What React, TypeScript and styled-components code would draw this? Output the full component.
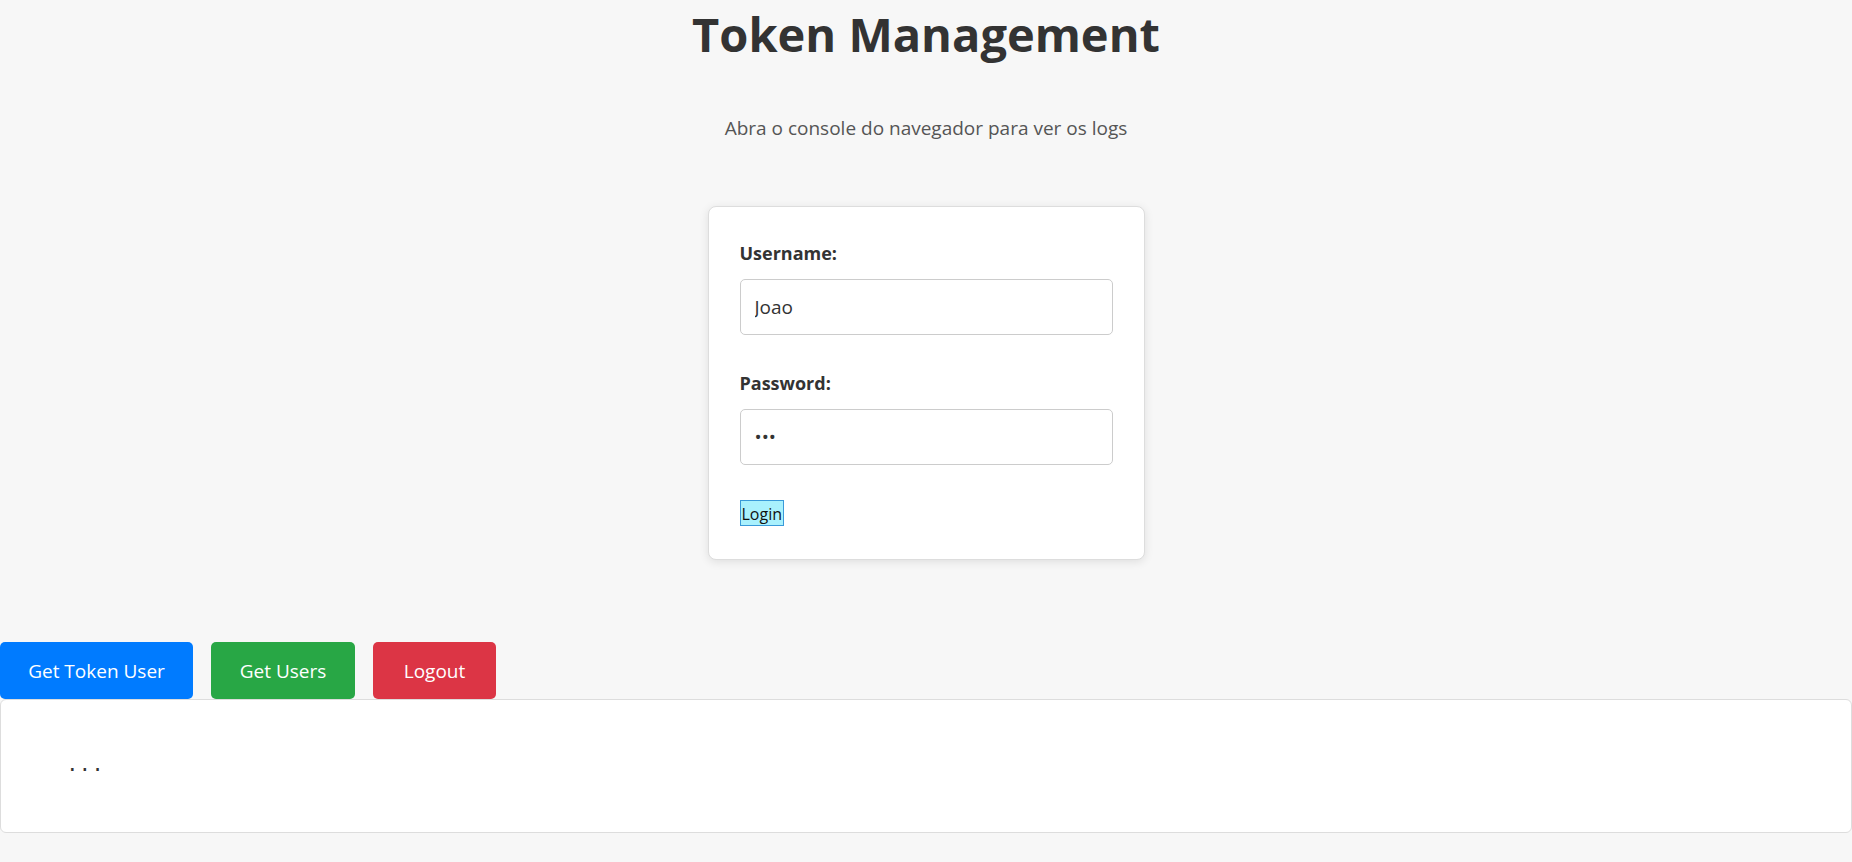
import React from "react";
import styled, { createGlobalStyle } from "styled-components";

const GlobalStyle = createGlobalStyle`
  html, body { margin: 0; padding: 0; }
  body {
    background: #f7f7f7;
    font-family: "Open Sans", "Noto Sans", sans-serif;
    color: #333;
  }
  * { box-sizing: border-box; }
`;

const Page = styled.div`
  display: flex;
  flex-direction: column;
  min-height: 862px;
`;

const Title = styled.h1`
  margin: 0;
  padding-top: 5px;
  text-align: center;
  font-size: 47px;
  line-height: 58px;
  font-weight: 700;
  color: #333;
`;

const Subtitle = styled.p`
  margin: 51px 0 0;
  text-align: center;
  font-size: 19px;
  line-height: 28px;
  color: #555;
`;

const Card = styled.form`
  width: 437px;
  margin: 64px auto 0;
  padding: 32px 31px 33px;
  background: #fff;
  border: 1px solid #ddd;
  border-radius: 8px;
  box-shadow: 0 2px 10px rgba(0, 0, 0, 0.1);
  display: flex;
  flex-direction: column;
`;

const Field = styled.div<{ $gap?: number }>`
  display: flex;
  flex-direction: column;
  gap: 12px;
  margin-bottom: ${(p) => p.$gap ?? 0}px;
`;

const Label = styled.label`
  font-size: 18px;
  line-height: 28px;
  font-weight: 700;
  color: #333;
`;

const Input = styled.input`
  height: 56px;
  width: 100%;
  padding: 0 14px;
  border: 1px solid #ccc;
  border-radius: 5px;
  font-family: inherit;
  font-size: 19px;
  color: #333;
  background: #fff;
  outline: none;
`;

const LoginButton = styled.button`
  align-self: flex-start;
  height: 26px;
  padding: 2px 1px 0;
  background: #a9f1fd;
  border: 1px solid #3a9ad9;
  font-family: inherit;
  font-size: 16px;
  line-height: 22px;
  color: #111;
  cursor: pointer;
`;

const ButtonRow = styled.div`
  display: flex;
  gap: 18px;
  margin-top: 82px;
`;

const ActionButton = styled.button<{ $bg: string; $w: number }>`
  width: ${(p) => p.$w}px;
  height: 57px;
  padding: 0;
  border: none;
  border-radius: 5px;
  background: ${(p) => p.$bg};
  color: #fff;
  font-family: inherit;
  font-size: 19px;
  cursor: pointer;
`;

const Output = styled.div`
  height: 134px;
  background: #fff;
  border: 1px solid #ddd;
  border-radius: 6px;
  padding: 54px 65px 0;
`;

const Dots = styled.pre`
  margin: 0;
  font-family: "Liberation Mono", monospace;
  font-size: 21px;
  line-height: 24px;
  color: #333;
`;

export default function App() {
  return (
    <>
      <GlobalStyle />
      <Page>
        <Title>Token Management</Title>
        <Subtitle>Abra o console do navegador para ver os logs</Subtitle>
        <Card onSubmit={(e) => e.preventDefault()}>
          <Field $gap={34}>
            <Label htmlFor="username">Username:</Label>
            <Input id="username" type="text" defaultValue="Joao" />
          </Field>
          <Field $gap={35}>
            <Label htmlFor="password">Password:</Label>
            <Input id="password" type="password" defaultValue="123" />
          </Field>
          <LoginButton type="submit">Login</LoginButton>
        </Card>
        <ButtonRow>
          <ActionButton $bg="#007bff" $w={193}>Get Token User</ActionButton>
          <ActionButton $bg="#28a745" $w={144}>Get Users</ActionButton>
          <ActionButton $bg="#dc3545" $w={123}>Logout</ActionButton>
        </ButtonRow>
        <Output>
          <Dots>...</Dots>
        </Output>
      </Page>
    </>
  );
}
